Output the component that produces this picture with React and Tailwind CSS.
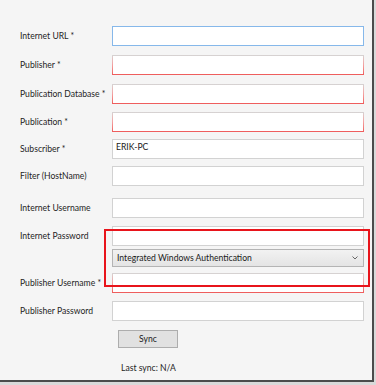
import React from "react";

const fields = [
  { label: "Internet URL *", mt: "mt-[26px]", kind: "focus" },
  { label: "Publisher *", mt: "mt-[9px]", kind: "error" },
  { label: "Publication Database *", mt: "mt-[9px]", kind: "error" },
  { label: "Publication *", mt: "mt-[8px]", kind: "error" },
  { label: "Subscriber *", mt: "mt-[7px]", kind: "normal", value: "ERIK-PC" },
  { label: "Filter (HostName)", mt: "mt-[7px]", kind: "normal" },
  { label: "Internet Username", mt: "mt-[12px]", kind: "normal" },
  { label: "Internet Password", mt: "mt-[8px]", kind: "normal" },
];

const Field = ({ kind, value }) => {
  if (kind === "error") {
    return (
      <div className="w-[252px] h-5 p-px bg-gradient-to-b from-[#d4d4d4] via-[#f3a0a0] to-[#ee5a5a]">
        <div className="h-full bg-white" />
      </div>
    );
  }
  return (
    <div
      className={
        "w-[252px] h-5 bg-white border flex items-start px-[3px] " +
        (kind === "focus" ? "border-[#86b8ea]" : "border-[#d2d2d2]")
      }
    >
      {value && <span className="leading-[14px] text-[#1a1a1a]">{value}</span>}
    </div>
  );
};

const Row = ({ label, mt, children }) => (
  <div className={"flex items-center h-5 " + mt}>
    <div className="w-[112px] pl-5 shrink-0 whitespace-nowrap text-[#1e1e1e]">{label}</div>
    {children}
  </div>
);

export default function App() {
  return (
    <div className="w-[376px] h-[385px] bg-[#d9d9d9]">
      <div
        className="relative w-[374px] h-[382px] bg-[#f5f5f5] border-r-2 border-b-2 border-[#4b4b4b] text-[8.6px] leading-[12px] overflow-hidden"
        style={{ fontFamily: 'Lato, "Open Sans", sans-serif' }}
      >
        {fields.map((f) => (
          <Row key={f.label} label={f.label} mt={f.mt}>
            <Field kind={f.kind} value={f.value} />
          </Row>
        ))}

        <div className="flex mt-[3px] pl-[112px]">
          <div className="w-[252px] h-[18px] border border-[#b4b4b4] bg-gradient-to-b from-[#f2f2f2] to-[#e4e4e4] flex items-center justify-between pl-[4px] pr-[5px] text-[#1a1a1a]">
            <span>Integrated Windows Authentication</span>
            <svg width="6" height="4" viewBox="0 0 6 4">
              <path d="M0.5 0.5 L3 3 L5.5 0.5" fill="none" stroke="#666" strokeWidth="1" />
            </svg>
          </div>
        </div>

        <Row label="Publisher Username *" mt="mt-[6px]">
          <Field kind="error" />
        </Row>
        <Row label="Publisher Password" mt="mt-[8px]">
          <Field kind="normal" />
        </Row>

        <div className="flex mt-[9px] pl-[118px]">
          <button className="w-[60px] h-[18px] bg-[#e1e1e1] border border-[#adadad] text-[#1a1a1a] leading-none">
            Sync
          </button>
        </div>

        <div className="mt-[14px] pl-[121px] text-[#1e1e1e]">Last sync: N/A</div>

        {/* red annotation box */}
        <div className="absolute left-[104px] top-[229px] w-[266px] h-[58px] border-2 border-[#e8141b]" />
      </div>
    </div>
  );
}
